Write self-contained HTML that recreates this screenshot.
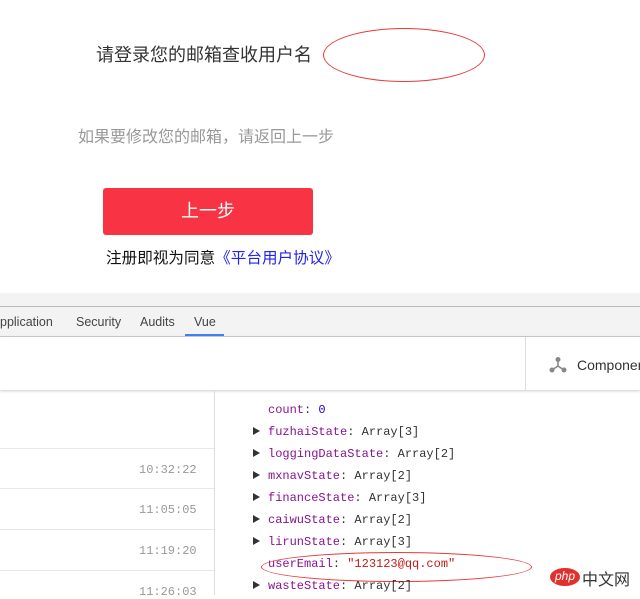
<!DOCTYPE html>
<html><head><meta charset="utf-8"><style>
*{margin:0;padding:0;box-sizing:border-box}
body{width:640px;height:595px;overflow:hidden;background:#fff;position:relative;font-family:"Liberation Sans","Noto Sans CJK SC",sans-serif}
.a{position:absolute;white-space:nowrap}
.mono{font-family:"Liberation Mono","DejaVu Sans Mono",monospace;font-size:12px}
.k{color:#881391}.v{color:#333}
.tri{position:absolute;left:253px;width:0;height:0;border-left:7px solid #333;border-top:4.5px solid transparent;border-bottom:4.5px solid transparent}
</style></head><body>
<div class="a" style="left:96px;top:41px;font-size:18px;color:#333">请登录您的邮箱查收用户名</div>
<div class="a" style="left:323px;top:28px;width:162px;height:54px;border:1px solid #e83a3a;border-radius:50%"></div>
<div class="a" style="left:78px;top:123px;font-size:16px;color:#999">如果要修改您的邮箱，请返回上一步</div>
<div class="a" style="left:103px;top:188px;width:210px;height:47px;background:#f73344;border-radius:3px;color:#fff;font-size:18px;text-align:center;line-height:47px">上一步</div>
<div class="a" style="left:106px;top:246px;font-size:15.6px;color:#111">注册即视为同意<span style="color:#2222ee">《平台用户协议》</span></div>
<div class="a" style="left:0;top:293px;width:640px;height:14px;background:#f3f3f3;border-bottom:1px solid #bbb"></div>
<div class="a" style="left:0;top:307px;width:640px;height:30px;background:#f3f3f3;border-bottom:1px solid #ccc"></div>
<div class="a" style="left:0;top:315px;font-size:12.5px;color:#444">pplication</div>
<div class="a" style="left:76px;top:315px;font-size:12.5px;color:#444">Security</div>
<div class="a" style="left:140px;top:315px;font-size:12.5px;color:#444">Audits</div>
<div class="a" style="left:194px;top:315px;font-size:12.5px;color:#444">Vue</div>
<div class="a" style="left:185px;top:334px;width:39px;height:2px;background:#3b82f6"></div>
<div class="a" style="left:0;top:337px;width:640px;height:53px;background:#fff;box-shadow:0 1px 3px rgba(0,0,0,.2)"></div>
<div class="a" style="left:525px;top:337px;width:1px;height:53px;background:#ddd"></div>
<svg class="a" style="left:549px;top:356px" width="18" height="18" viewBox="0 0 18 18"><circle cx="9" cy="3.5" r="2.5" fill="#888"/><circle cx="3" cy="14" r="2.5" fill="#888"/><circle cx="15" cy="14" r="2.5" fill="#888"/><path d="M9 5v5L3 14M9 10l6 4" stroke="#888" stroke-width="1.6" fill="none"/></svg>
<div class="a" style="left:577px;top:357px;font-size:14px;color:#333">Componer</div>
<div class="a" style="left:214px;top:390px;width:1px;height:205px;background:#ddd"></div>
<div class="a" style="left:0;top:448px;width:214px;height:1px;background:#e8e8e8"></div>
<div class="a" style="left:0;top:488px;width:214px;height:1px;background:#e8e8e8"></div>
<div class="a" style="left:0;top:529px;width:214px;height:1px;background:#e8e8e8"></div>
<div class="a" style="left:0;top:570px;width:214px;height:1px;background:#e8e8e8"></div>
<div class="a mono" style="left:139px;top:463px;color:#999">10:32:22</div>
<div class="a mono" style="left:139px;top:503px;color:#999">11:05:05</div>
<div class="a mono" style="left:139px;top:544px;color:#999">11:19:20</div>
<div class="a mono" style="left:139px;top:585px;color:#999">11:26:03</div>
<div class="a mono" style="left:268px;top:403px"><span class="k">count</span><span class="v">: </span><span style="color:#1c00cf">0</span></div>
<div class="tri" style="top:427px"></div><div class="a mono" style="left:268px;top:425px"><span class="k">fuzhaiState</span><span class="v">: Array[3]</span></div>
<div class="tri" style="top:449px"></div><div class="a mono" style="left:268px;top:447px"><span class="k">loggingDataState</span><span class="v">: Array[2]</span></div>
<div class="tri" style="top:471px"></div><div class="a mono" style="left:268px;top:469px"><span class="k">mxnavState</span><span class="v">: Array[2]</span></div>
<div class="tri" style="top:493px"></div><div class="a mono" style="left:268px;top:491px"><span class="k">financeState</span><span class="v">: Array[3]</span></div>
<div class="tri" style="top:515px"></div><div class="a mono" style="left:268px;top:513px"><span class="k">caiwuState</span><span class="v">: Array[2]</span></div>
<div class="tri" style="top:537px"></div><div class="a mono" style="left:268px;top:535px"><span class="k">lirunState</span><span class="v">: Array[3]</span></div>
<div class="a mono" style="left:268px;top:557px"><span class="k">userEmail</span><span class="v">: </span><span style="color:#c41a16">"123123@qq.com"</span></div>
<div class="a" style="left:261px;top:552px;width:271px;height:30px;border:1px solid #e83a3a;border-radius:50%"></div>
<div class="tri" style="top:581px"></div><div class="a mono" style="left:268px;top:579px"><span class="k">wasteState</span><span class="v">: Array[2]</span></div>
<div class="a" style="left:550px;top:568px;width:30px;height:18px;background:#e0312f;border-radius:50%;color:#fff;font-size:12px;text-align:center;line-height:17px;font-style:italic">php</div>
<div class="a" style="left:582px;top:566px;font-size:16px;color:#333">中文网</div>
</body></html>
